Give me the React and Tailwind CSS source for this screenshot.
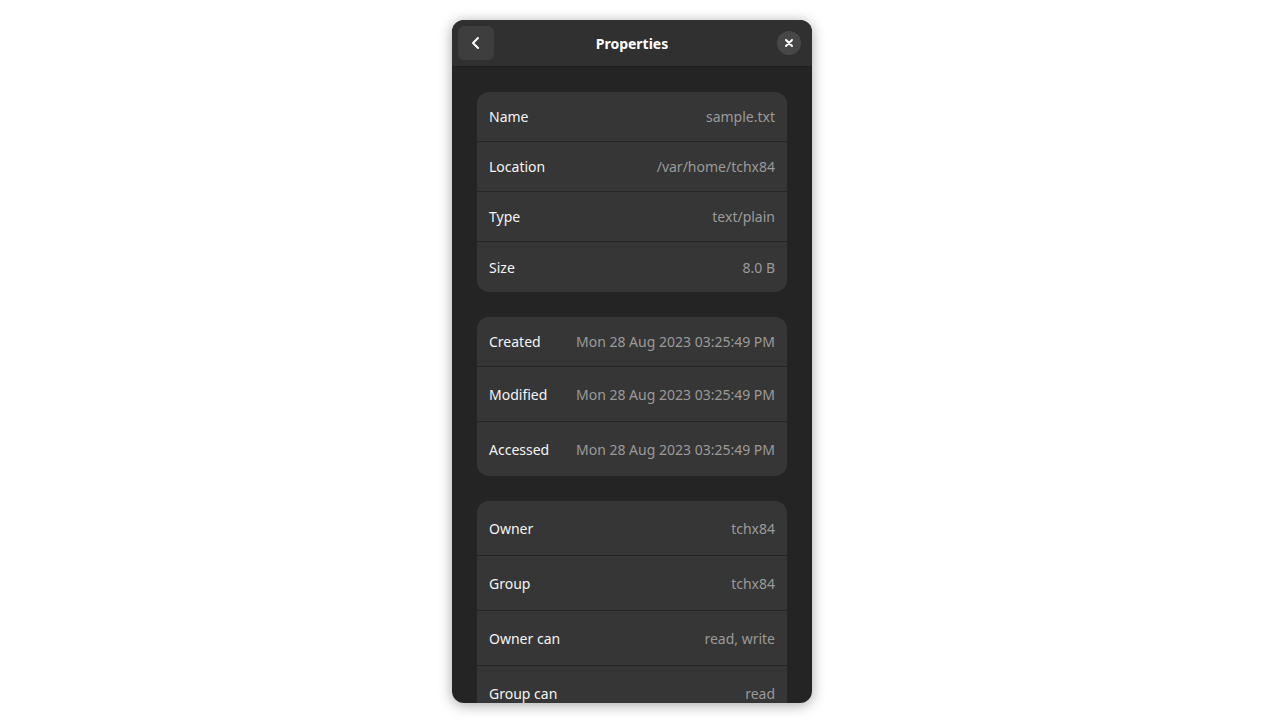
import React from "react";

const groups = [
  [
    { label: "Name", value: "sample.txt", h: "h-[50px]" },
    { label: "Location", value: "/var/home/tchx84", h: "h-[50px]" },
    { label: "Type", value: "text/plain", h: "h-[50px]" },
    { label: "Size", value: "8.0 B", h: "h-[50px]" },
  ],
  [
    { label: "Created", value: "Mon 28 Aug 2023 03:25:49 PM", h: "h-[50px]" },
    { label: "Modified", value: "Mon 28 Aug 2023 03:25:49 PM", h: "h-[55px]" },
    { label: "Accessed", value: "Mon 28 Aug 2023 03:25:49 PM", h: "h-[54px]" },
  ],
  [
    { label: "Owner", value: "tchx84", h: "h-[55px]" },
    { label: "Group", value: "tchx84", h: "h-[55px]" },
    { label: "Owner can", value: "read, write", h: "h-[55px]" },
    { label: "Group can", value: "read", h: "h-[55px]" },
  ],
];

const Row = ({ label, value, h, last }) => (
  <div
    className={`flex items-center justify-between px-3 ${h} ${
      last ? "" : "border-b border-[#262626]"
    }`}
  >
    <span className="text-[#f4f4f4]">{label}</span>
    <span className="text-[#9a9a9a]">{value}</span>
  </div>
);

export default function App() {
  return (
    <div
      className="w-[1280px] h-[720px] bg-white flex justify-center pt-5 pr-4"
      style={{ fontFamily: '"Noto Sans", "Open Sans", sans-serif' }}
    >
      <div className="w-[360px] h-[683px] rounded-xl bg-[#242424] overflow-hidden flex flex-col shadow-[0_2px_14px_rgba(0,0,0,0.35)] text-[14px]">
        {/* Header */}
        <div className="h-[47px] shrink-0 bg-[#303030] border-b border-[#1e1e1e] flex items-center justify-between px-[6px]">
          <button className="w-[36px] h-[34px] rounded-md bg-[#3e3e3e] flex items-center justify-center">
            <svg width="16" height="16" viewBox="0 0 16 16">
              <path
                d="M10 3 L5 8 L10 13"
                fill="none"
                stroke="#ffffff"
                strokeWidth="2"
                strokeLinecap="round"
                strokeLinejoin="round"
              />
            </svg>
          </button>
          <span className="font-bold text-white text-[14px]">Properties</span>
          <div className="w-[36px] h-[34px] flex items-center justify-end pr-[5px]">
            <button className="w-6 h-6 rounded-full bg-[#474747] flex items-center justify-center">
              <svg width="10" height="10" viewBox="0 0 10 10">
                <path
                  d="M2 2 L8 8 M8 2 L2 8"
                  stroke="#ffffff"
                  strokeWidth="2"
                  strokeLinecap="round"
                />
              </svg>
            </button>
          </div>
        </div>

        {/* Content */}
        <div className="flex-1 overflow-hidden px-[25px] pt-[25px] flex flex-col gap-[25px]">
          {groups.map((rows, gi) => (
            <div key={gi} className="bg-[#363636] rounded-xl shrink-0 overflow-hidden">
              {rows.map((r, i) => (
                <Row key={r.label} {...r} last={i === rows.length - 1} />
              ))}
            </div>
          ))}
        </div>
      </div>
    </div>
  );
}
